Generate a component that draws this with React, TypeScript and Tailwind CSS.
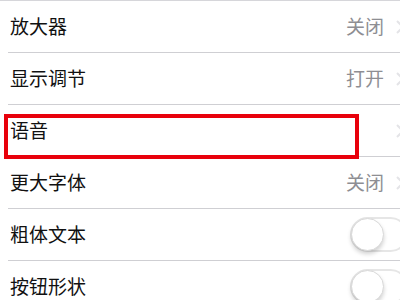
import { ReactNode } from "react";

const font = { fontFamily: '"Noto Sans CJK SC", "Noto Sans", sans-serif' };

const Chevron = () => (
  <svg width="8" height="14" viewBox="0 0 8 14" className="ml-[12px] mr-[-4px] shrink-0">
    <path d="M1 1l6 6-6 6" fill="none" stroke="#e4e4e7" strokeWidth="2" />
  </svg>
);

const Toggle = () => (
  <div className="relative h-[35px] w-[58px] mr-[-8px] shrink-0 rounded-full border-2 border-[#e6e6e6] bg-white">
    <div className="absolute left-[-1px] top-[-1px] h-[33px] w-[33px] rounded-full border border-[#d9d9d9] bg-white shadow-[0_3px_4px_rgba(0,0,0,0.18)]" />
  </div>
);

type Row = { label: string; value?: string; toggle?: boolean; mark?: boolean };

const rows: Row[] = [
  { label: "放大器", value: "关闭" },
  { label: "显示调节", value: "打开" },
  { label: "语音", mark: true },
  { label: "更大字体", value: "关闭" },
  { label: "粗体文本", toggle: true },
  { label: "按钮形状", toggle: true },
];

const SettingsRow = ({ row }: { row: Row }) => {
  let right: ReactNode;
  if (row.toggle) {
    right = <Toggle />;
  } else {
    right = (
      <>
        {row.value && <span className="text-[19px] text-[#8e8e93]">{row.value}</span>}
        <Chevron />
      </>
    );
  }
  return (
    <div className="relative">
      <div className="ml-[8px] flex h-[52px] items-center border-b border-[#cfcfd3]">
        <span className="flex-1 pl-[2px] text-[19px] text-[#111]">{row.label}</span>
        {right}
      </div>
      {row.mark && (
        <div className="absolute left-[4px] top-[9px] h-[45px] w-[355px] border-[4px] border-[#e8000b]" />
      )}
    </div>
  );
};

export default function App() {
  return (
    <div className="h-[300px] w-[400px] overflow-hidden bg-white" style={font}>
      <div className="border-t border-[#d6d6da]">
        {rows.map((r) => (
          <SettingsRow key={r.label} row={r} />
        ))}
      </div>
    </div>
  );
}
